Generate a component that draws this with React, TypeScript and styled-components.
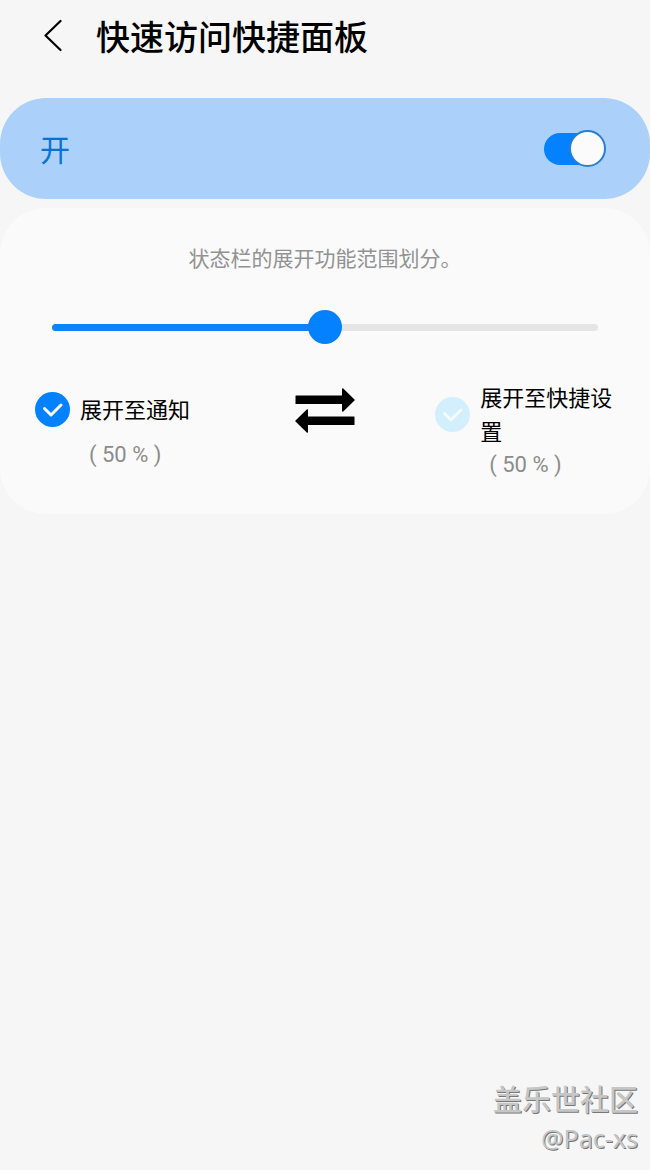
import React, { useState } from "react";
import styled, { createGlobalStyle } from "styled-components";

const GlobalStyle = createGlobalStyle`
  *, *::before, *::after { box-sizing: border-box; }
  body {
    margin: 0;
    background: #f6f6f6;
    font-family: Roboto, "Noto Sans CJK SC", sans-serif;
    color: #000;
  }
`;

const Page = styled.div`
  min-height: 100vh;
  display: flex;
  flex-direction: column;
`;

const Header = styled.header`
  display: flex;
  align-items: center;
  gap: 24px;
  height: 72px;
  padding: 0 32px 0 36px;
`;

const BackButton = styled.button`
  display: flex;
  align-items: center;
  justify-content: center;
  width: 36px;
  height: 40px;
  padding: 0;
  border: 0;
  background: none;
`;

const Title = styled.h1`
  margin: 0;
  padding-top: 4px;
  font-size: 34px;
  line-height: 48px;
  font-weight: 500;
`;

const Main = styled.main`
  display: flex;
  flex-direction: column;
  gap: 9px;
  padding-top: 26px;
`;

const MasterSwitch = styled.label`
  display: flex;
  align-items: center;
  justify-content: space-between;
  height: 101px;
  padding: 0 44px 0 40px;
  border-radius: 46px;
  background: #abd1fb;
  color: #0b72d4;
  font-size: 30px;
  line-height: 44px;
`;

const SwitchText = styled.span`
  padding-top: 4px;
`;

const Switch = styled.input.attrs({ type: "checkbox", role: "switch" })`
  appearance: none;
  display: flex;
  align-items: center;
  width: 62px;
  height: 38px;
  margin: 0;
  &::before {
    content: "";
    flex: none;
    width: 56px;
    height: 32px;
    border-radius: 16px;
    background: ${(p) => (p.checked ? "#0381fe" : "#8f8f8f")};
  }
  &::after {
    content: "";
    flex: none;
    width: 37px;
    height: 37px;
    margin-left: ${(p) => (p.checked ? "-31px" : "-56px")};
    border: 2px solid #2a7fd0;
    border-radius: 50%;
    background: #fbfbfb;
  }
`;

const Card = styled.section`
  padding: 34px 35px;
  border-radius: 46px;
  background: #fafafa;
`;

const Description = styled.p`
  margin: 0;
  text-align: center;
  font-size: 21px;
  line-height: 34px;
  color: #929292;
`;

const Range = styled.input.attrs({ type: "range" })<{ $value: number }>`
  appearance: none;
  display: block;
  width: calc(100% - 34px);
  height: 34px;
  margin: 34px 17px 38px;
  background: none;
  &::-webkit-slider-runnable-track {
    height: 7px;
    border-radius: 4px;
    background: linear-gradient(
      to right,
      #0f83f5 ${(p) => p.$value}%,
      #e5e5e5 ${(p) => p.$value}%
    );
  }
  &::-webkit-slider-thumb {
    appearance: none;
    width: 34px;
    height: 34px;
    margin-top: -14px;
    border-radius: 50%;
    background: #0381fe;
  }
`;

const Options = styled.div`
  display: grid;
  grid-template-columns: 31% auto 31%;
  justify-content: space-between;
  align-items: start;
`;

const OptionLabel = styled.label`
  display: flex;
  align-items: center;
  gap: 10px;
  min-height: 58px;
  font-size: 22px;
  line-height: 34px;
`;

const Tick = styled.span<{ $on: boolean }>`
  display: grid;
  flex: none;
  width: 35px;
  height: 35px;
  margin-bottom: 4px;
  border-radius: 50%;
  background: ${(p) => (p.$on ? "#0381fe" : "#d3effe")};
  > * {
    grid-area: 1 / 1;
  }
`;

const TickInput = styled.input.attrs({ type: "checkbox" })`
  appearance: none;
  width: 35px;
  height: 35px;
  margin: 0;
`;

const Percent = styled.p`
  margin: 0;
  padding-left: 54px;
  font-size: 22px;
  line-height: 30px;
  color: #8c8c8c;
`;

const SwapButton = styled.button`
  display: block;
  margin: 6px 0 0;
  padding: 0;
  border: 0;
  background: none;
`;

const Watermark = styled.footer`
  margin-top: auto;
  padding: 0 12px 14px;
  text-align: right;
  color: #c6c6c6;
  text-shadow: 1px 1px 0 #777;
`;

const Community = styled.div`
  font-size: 29px;
  line-height: 38px;
  font-weight: 500;
`;

const Author = styled.div`
  font-family: "Noto Sans", sans-serif;
  font-size: 25px;
  line-height: 36px;
`;

function Option(props: {
  label: string;
  percent: number;
  checked: boolean;
  onSelect: () => void;
}) {
  return (
    <div>
      <OptionLabel>
        <Tick $on={props.checked}>
          <TickInput checked={props.checked} onChange={props.onSelect} />
          <svg width="35" height="35" viewBox="0 0 35 35" fill="none" aria-hidden="true">
            <path
              d="M9.5 16.5 L16 23 L26 13"
              stroke={props.checked ? "#fafafa" : "#f4fbff"}
              strokeWidth="3"
              strokeLinecap="round"
              strokeLinejoin="round"
            />
          </svg>
        </Tick>
        <span>{props.label}</span>
      </OptionLabel>
      <Percent>{`( ${props.percent} % )`}</Percent>
    </div>
  );
}

export default function App() {
  const [enabled, setEnabled] = useState(true);
  const [split, setSplit] = useState(50);
  const [left, setLeft] = useState(true);

  return (
    <>
      <GlobalStyle />
      <Page>
        <Header>
          <BackButton type="button" aria-label="返回">
            <svg width="20" height="34" viewBox="0 0 20 34" fill="none" aria-hidden="true">
              <path
                d="M16.5 2 L1.5 16.5 L16.5 31"
                stroke="#000"
                strokeWidth="2.2"
                strokeLinecap="round"
                strokeLinejoin="round"
              />
            </svg>
          </BackButton>
          <Title>快速访问快捷面板</Title>
        </Header>
        <Main>
          <MasterSwitch>
            <SwitchText>开</SwitchText>
            <Switch checked={enabled} onChange={(e) => setEnabled(e.target.checked)} />
          </MasterSwitch>
          <Card>
            <Description>状态栏的展开功能范围划分。</Description>
            <Range
              aria-label="展开功能范围"
              min={0}
              max={100}
              value={split}
              $value={split}
              onChange={(e) => setSplit(Number(e.target.value))}
            />
            <Options>
              <Option
                label="展开至通知"
                percent={split}
                checked={left}
                onSelect={() => setLeft(true)}
              />
              <SwapButton type="button" aria-label="交换" onClick={() => setLeft(!left)}>
                <svg width="60" height="46" viewBox="0 0 60 46" aria-hidden="true">
                  <path
                    d="M1 7.5 H47 V1 Q47 0 48 0.3 L59.5 11.5 Q60 12 59.5 12.5 L48 23.7 Q47 24 47 23 V16 H1 Q0.5 16 0.5 15.5 V8 Q0.5 7.5 1 7.5 Z"
                  />
                  <path
                    d="M59 28.5 H13 V22 Q13 21 12 21.3 L0.5 32.5 Q0 33 0.5 33.5 L12 44.7 Q13 45 13 44 V37 H59 Q59.5 37 59.5 36.5 V29 Q59.5 28.5 59 28.5 Z"
                  />
                </svg>
              </SwapButton>
              <Option
                label="展开至快捷设置"
                percent={100 - split}
                checked={!left}
                onSelect={() => setLeft(false)}
              />
            </Options>
          </Card>
        </Main>
        <Watermark>
          <Community>盖乐世社区</Community>
          <Author>@Pac-xs</Author>
        </Watermark>
      </Page>
    </>
  );
}
